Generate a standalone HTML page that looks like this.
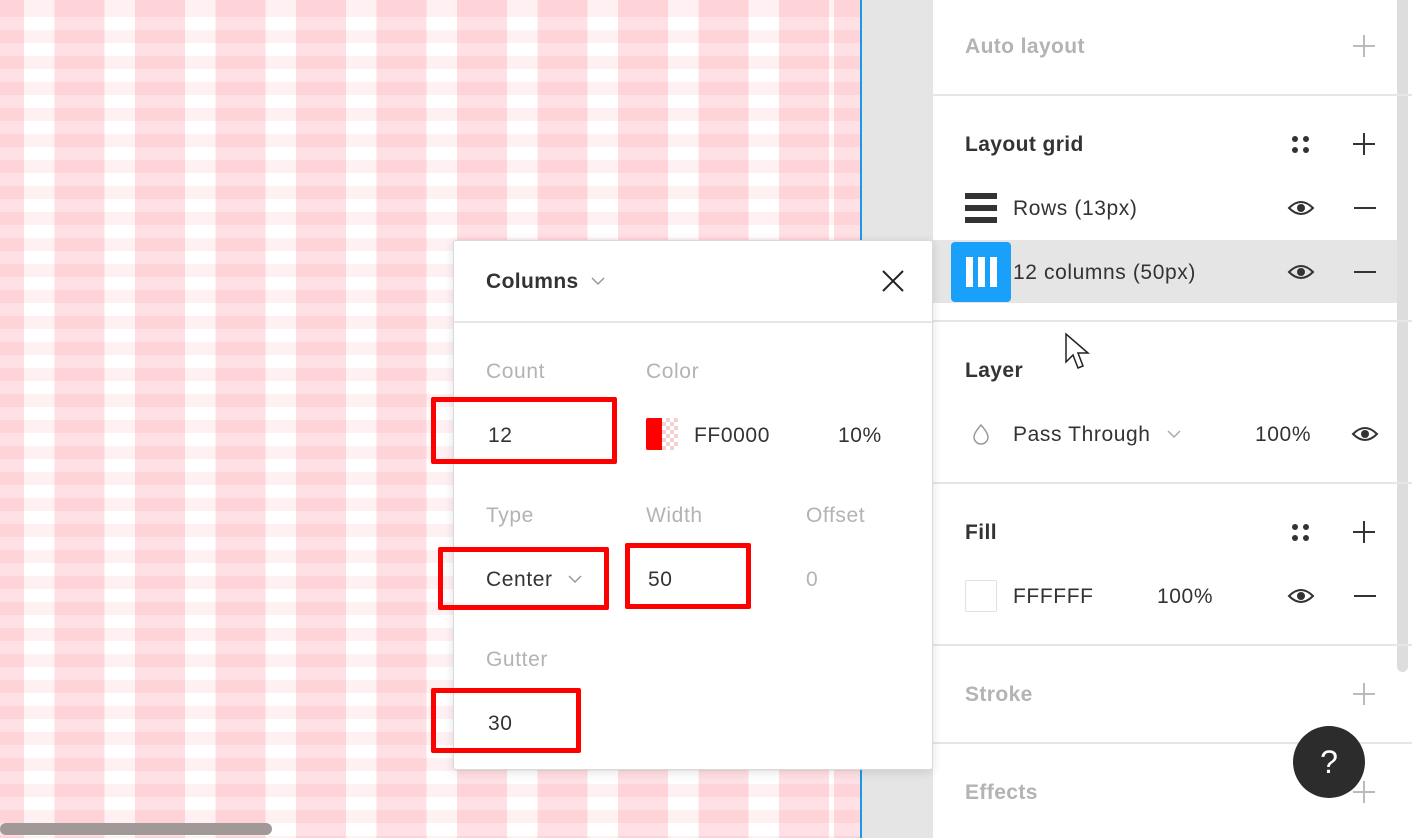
<!DOCTYPE html>
<html><head><meta charset="utf-8"><style>
*{margin:0;padding:0;box-sizing:border-box}
body{width:1412px;height:838px;overflow:hidden;position:relative;background:#fff;font-family:"Liberation Sans",sans-serif;color:#333}
.canvas{position:absolute;left:0;top:0;width:860px;height:838px;background:
repeating-linear-gradient(180deg,rgba(255,0,30,.055) 0 13px,transparent 13px 26px),
repeating-linear-gradient(90deg,rgba(255,0,30,.12) 0 50px,transparent 50px 80.5px);background-position:0 4px,-26px 0;background-color:#fff}
.blue{position:absolute;left:860px;top:0;width:2px;height:838px;background:#1a9ae6}
.grey{position:absolute;left:862px;top:0;width:71px;height:838px;background:#e5e5e5}
.panel{position:absolute;left:933px;top:0;width:479px;height:838px;background:#fff}
.t{position:absolute;font-size:21px;letter-spacing:.6px;white-space:nowrap;margin-top:1px}
.h{font-weight:bold;letter-spacing:.4px}
.dim{color:#b3b3b3}
.hr{position:absolute;height:2px;background:#e6e6e6}
.sb{position:absolute;left:1397px;top:0;width:11px;height:672px;background:#ddd;border-radius:0 0 6px 6px}
.pop{position:absolute;left:453px;top:240px;width:480px;height:530px;background:#fff;border:1px solid #d9d9d9;border-radius:3px;box-shadow:0 2px 10px rgba(0,0,0,.12)}
.rb{position:absolute;border:5px solid #f00;border-radius:2px}
</style></head><body>
<div class="canvas"></div>
<div class="blue"></div>
<div class="grey"></div>
<div style="position:absolute;left:0;top:823px;width:272px;height:12px;background:#a19898;border-radius:6px"></div>
<div class="panel"></div>
<div style="position:absolute;left:933px;top:240px;width:464px;height:63px;background:#e5e5e5"></div>
<div class="sb"></div>
<div class="t h dim" style="left:965px;top:34px">Auto layout</div>
<svg style="position:absolute;left:1352px;top:34px" width="24" height="24"><path d="M12 1v22M1 12h22" stroke="#bbb" stroke-width="2"/></svg>
<div class="hr" style="left:933px;top:94px;width:479px"></div>
<div class="t h" style="left:965px;top:132px">Layout grid</div>
<svg style="position:absolute;left:1290px;top:134px" width="22" height="22" fill="#333"><circle cx="5" cy="5" r="3"/><circle cx="16" cy="5" r="3"/><circle cx="5" cy="16" r="3"/><circle cx="16" cy="16" r="3"/></svg>
<svg style="position:absolute;left:1352px;top:132px" width="24" height="24"><path d="M12 1v22M1 12h22" stroke="#333" stroke-width="2"/></svg>
<svg style="position:absolute;left:965px;top:193px" width="32" height="30" fill="#333"><rect width="32" height="6"/><rect y="12" width="32" height="6"/><rect y="24" width="32" height="6"/></svg>
<div class="t" style="left:1013px;top:196px">Rows (13px)</div>
<div style="position:absolute;left:951px;top:242px;width:60px;height:60px;background:#18a0fb;border-radius:4px"></div>
<svg style="position:absolute;left:966px;top:257px" width="31" height="30" fill="#fff"><rect width="7" height="30"/><rect x="12" width="7" height="30"/><rect x="24" width="7" height="30"/></svg>
<div class="t" style="left:1013px;top:260px">12 columns (50px)</div>
<svg style="position:absolute;left:1287px;top:198px" width="28" height="20"><path d="M2 10Q14 -2 26 10Q14 22 2 10Z" fill="none" stroke="#333" stroke-width="2"/><circle cx="14" cy="10" r="4" fill="#333"/></svg>
<svg style="position:absolute;left:1287px;top:262px" width="28" height="20"><path d="M2 10Q14 -2 26 10Q14 22 2 10Z" fill="none" stroke="#333" stroke-width="2"/><circle cx="14" cy="10" r="4" fill="#333"/></svg>
<div style="position:absolute;left:1354px;top:207px;width:22px;height:2px;background:#333"></div>
<div style="position:absolute;left:1354px;top:271px;width:22px;height:2px;background:#333"></div>
<div class="hr" style="left:933px;top:320px;width:479px"></div>
<svg style="position:absolute;left:1064px;top:332px" width="28" height="42"><path d="M2 2L2 30L9 23L14 36L19 34L14 21L24 21Z" fill="#fff" stroke="#222" stroke-width="1.5"/></svg>
<div class="t h" style="left:965px;top:358px">Layer</div>
<svg style="position:absolute;left:971px;top:423px" width="20" height="22"><path d="M10 2Q17 10 17 14A7 7 0 0 1 3 14Q3 10 10 2Z" fill="none" stroke="#999" stroke-width="1.5"/></svg>
<div class="t" style="left:1013px;top:422px">Pass Through</div>
<svg style="position:absolute;left:1166px;top:429px" width="16" height="10"><path d="M2 2l6 6 6-6" fill="none" stroke="#aaa" stroke-width="1.5"/></svg>
<div class="t" style="left:1255px;top:422px">100%</div>
<svg style="position:absolute;left:1351px;top:424px" width="28" height="20"><path d="M2 10Q14 -2 26 10Q14 22 2 10Z" fill="none" stroke="#333" stroke-width="2"/><circle cx="14" cy="10" r="4" fill="#333"/></svg>
<div class="hr" style="left:933px;top:482px;width:479px"></div>
<div class="t h" style="left:965px;top:520px">Fill</div>
<svg style="position:absolute;left:1290px;top:522px" width="22" height="22" fill="#333"><circle cx="5" cy="5" r="3"/><circle cx="16" cy="5" r="3"/><circle cx="5" cy="16" r="3"/><circle cx="16" cy="16" r="3"/></svg>
<svg style="position:absolute;left:1352px;top:520px" width="24" height="24"><path d="M12 1v22M1 12h22" stroke="#333" stroke-width="2"/></svg>
<div style="position:absolute;left:965px;top:580px;width:32px;height:32px;border:1px solid #e0e0e0;border-radius:2px"></div>
<div class="t" style="left:1013px;top:584px">FFFFFF</div>
<div class="t" style="left:1157px;top:584px">100%</div>
<svg style="position:absolute;left:1287px;top:586px" width="28" height="20"><path d="M2 10Q14 -2 26 10Q14 22 2 10Z" fill="none" stroke="#333" stroke-width="2"/><circle cx="14" cy="10" r="4" fill="#333"/></svg>
<div style="position:absolute;left:1354px;top:595px;width:22px;height:2px;background:#333"></div>
<div class="hr" style="left:933px;top:644px;width:479px"></div>
<div class="t h dim" style="left:965px;top:682px">Stroke</div>
<svg style="position:absolute;left:1352px;top:682px" width="24" height="24"><path d="M12 1v22M1 12h22" stroke="#bbb" stroke-width="2"/></svg>
<div class="hr" style="left:933px;top:742px;width:479px"></div>
<div class="t h dim" style="left:965px;top:780px">Effects</div>
<svg style="position:absolute;left:1352px;top:780px" width="24" height="24"><path d="M12 1v22M1 12h22" stroke="#bbb" stroke-width="2"/></svg>
<div style="position:absolute;left:1293px;top:726px;width:72px;height:72px;border-radius:50%;background:#2c2c2c;color:#fff;font-size:32px;text-align:center;line-height:72px">?</div>

<div class="pop">
<div class="t h" style="left:32px;top:28px">Columns</div>
<svg style="position:absolute;left:136px;top:35px" width="16" height="10"><path d="M2 2l6 6 6-6" fill="none" stroke="#999" stroke-width="1.5"/></svg>
<svg style="position:absolute;left:427px;top:28px" width="24" height="24"><path d="M2 2L22 22M22 2L2 22" stroke="#222" stroke-width="2"/></svg>
<div class="hr" style="left:0;top:80px;width:478px"></div>
<div class="t dim" style="left:32px;top:118px">Count</div>
<div class="t dim" style="left:192px;top:118px">Color</div>
<div class="t" style="left:34px;top:182px">12</div>
<div style="position:absolute;left:192px;top:177px;width:32px;height:32px;border-radius:2px;overflow:hidden;background:repeating-conic-gradient(#f5d0d0 0 25%,#fff 0 50%) 0 0/8px 8px"><div style="width:16px;height:32px;background:#f00"></div></div>
<div class="t" style="left:240px;top:182px">FF0000</div>
<div class="t" style="left:384px;top:182px">10%</div>
<div class="t dim" style="left:32px;top:262px">Type</div>
<div class="t dim" style="left:192px;top:262px">Width</div>
<div class="t dim" style="left:352px;top:262px">Offset</div>
<div class="t" style="left:32px;top:326px">Center</div>
<svg style="position:absolute;left:113px;top:333px" width="16" height="10"><path d="M2 2l6 6 6-6" fill="none" stroke="#999" stroke-width="1.5"/></svg>
<div class="t" style="left:194px;top:326px">50</div>
<div class="t dim" style="left:352px;top:326px">0</div>
<div class="t dim" style="left:32px;top:406px">Gutter</div>
<div class="t" style="left:34px;top:470px">30</div>
</div>
<div class="rb" style="left:431px;top:397px;width:186px;height:67px"></div>
<div class="rb" style="left:438px;top:547px;width:171px;height:63px"></div>
<div class="rb" style="left:625px;top:543px;width:126px;height:66px"></div>
<div class="rb" style="left:431px;top:688px;width:150px;height:65px"></div>
</body></html>
